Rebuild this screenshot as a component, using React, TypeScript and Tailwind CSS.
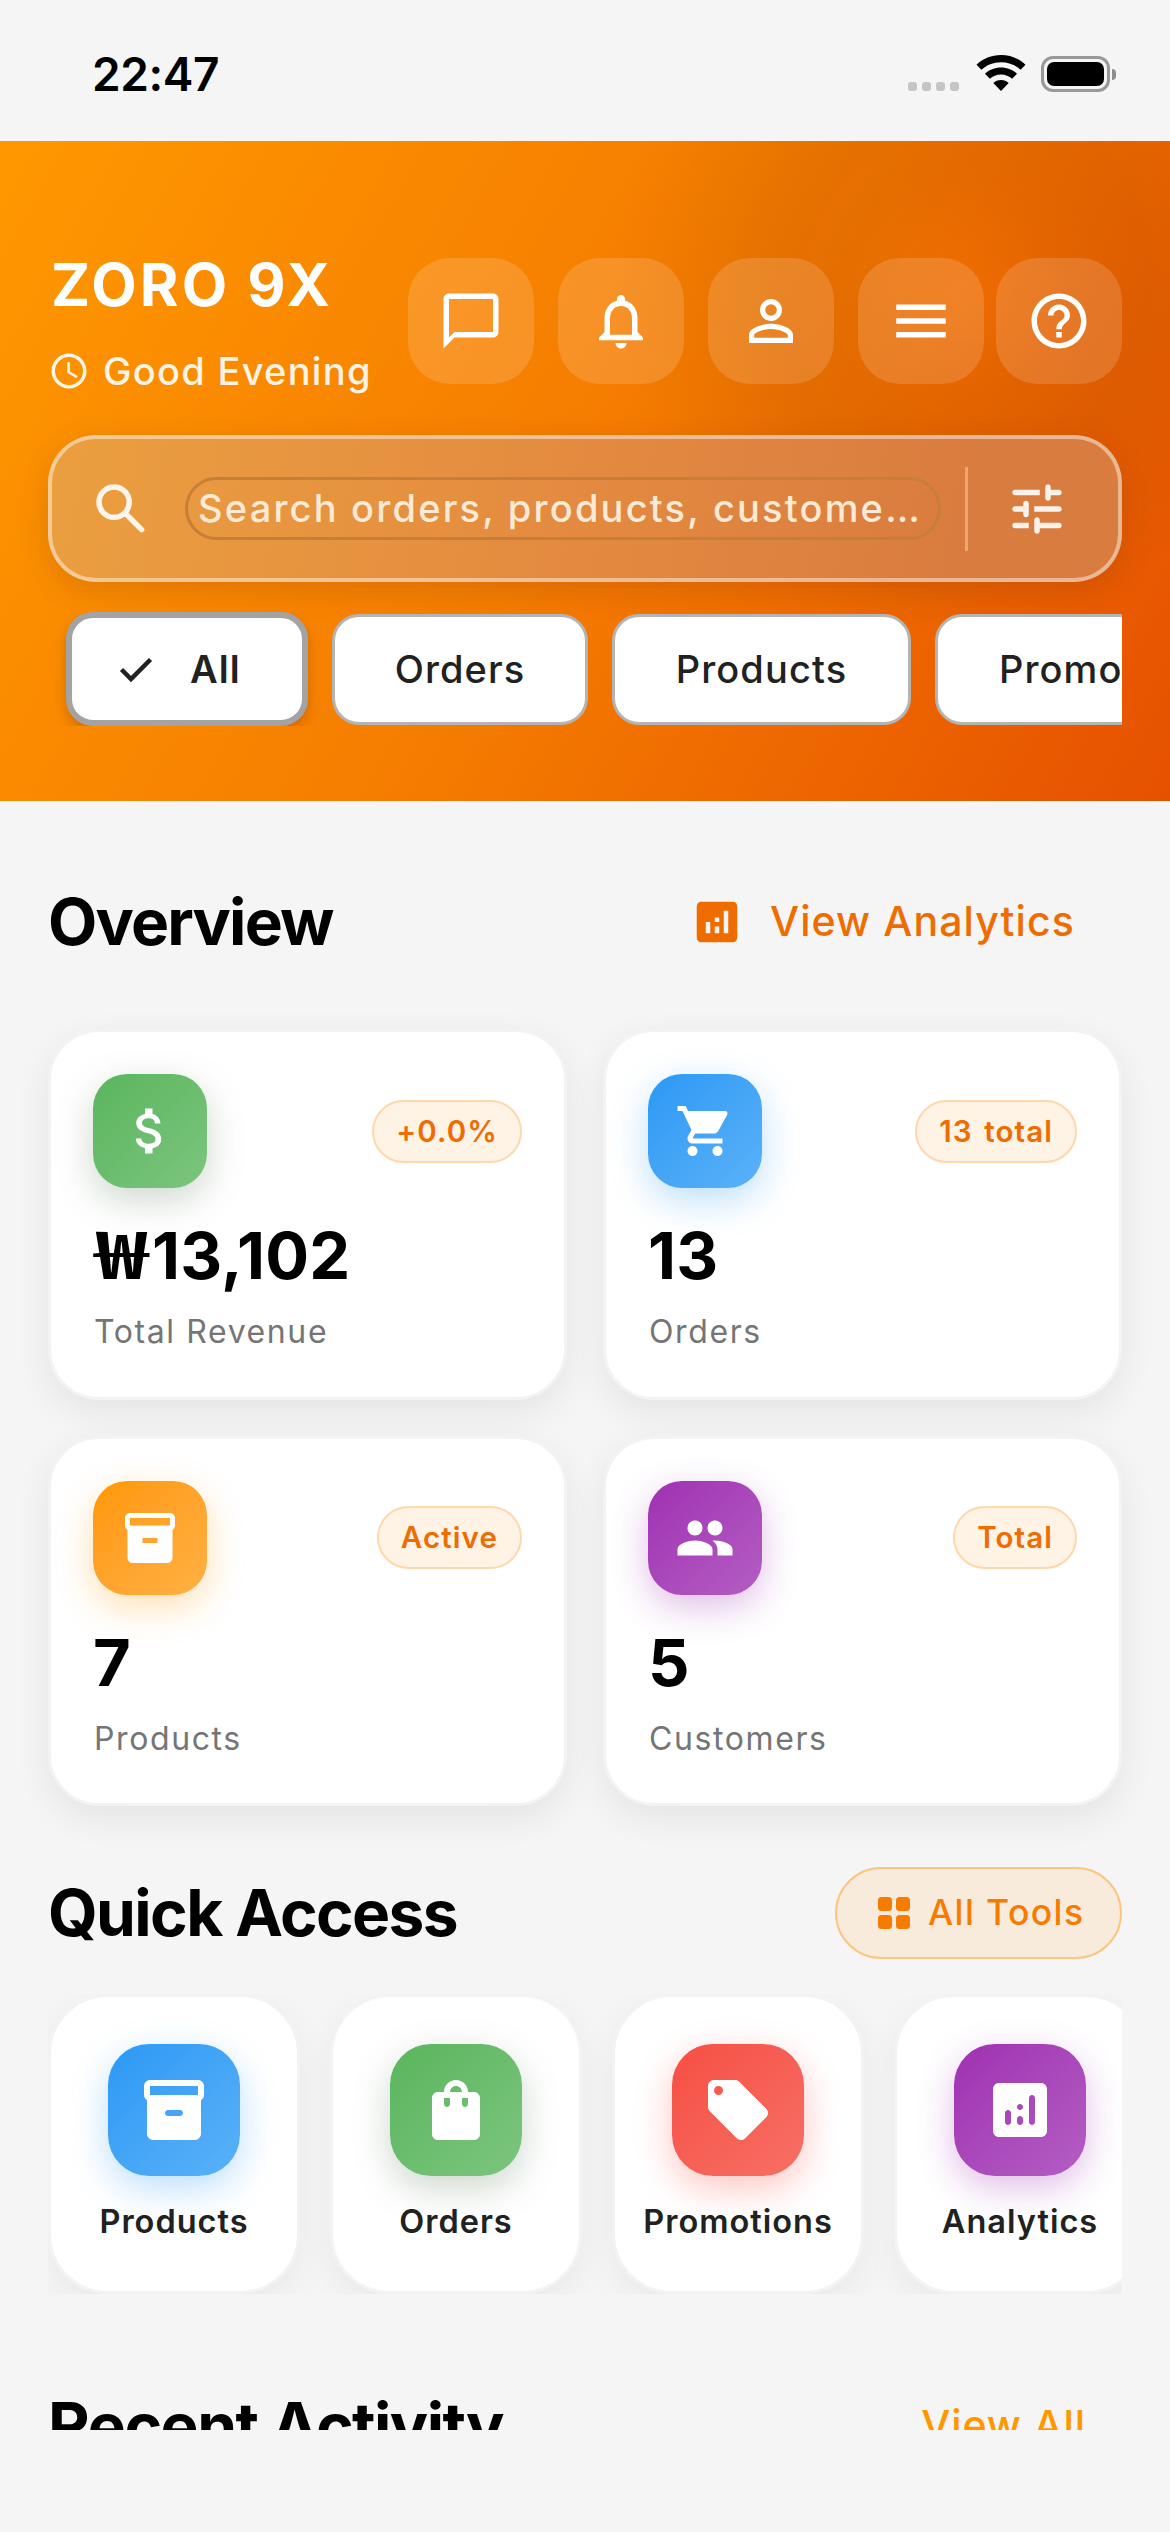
import type { ReactNode } from 'react';
import {
  MdAccessTime,
  MdAnalytics,
  MdAttachMoney,
  MdChatBubbleOutline,
  MdHelpOutline,
  MdInventory2,
  MdLocalOffer,
  MdMenu,
  MdNotificationsNone,
  MdPeople,
  MdPersonOutline,
  MdShoppingCart,
} from 'react-icons/md';

const TuneIcon = () => (
  <svg viewBox="0 0 24 24" className="size-[66px]" fill="currentColor">
    <path d="M3 18c0 .55.45 1 1 1h5v-2H4c-.55 0-1 .45-1 1zM3 6c0 .55.45 1 1 1h9V5H4c-.55 0-1 .45-1 1zm10 14v-1h7c.55 0 1-.45 1-1s-.45-1-1-1h-7v-1c0-.55-.45-1-1-1s-1 .45-1 1v4c0 .55.45 1 1 1s1-.45 1-1zM7 10v1H4c-.55 0-1 .45-1 1s.45 1 1 1h3v1c0 .55.45 1 1 1s1-.45 1-1v-4c0-.55-.45-1-1-1s-1 .45-1 1zm14 2c0-.55-.45-1-1-1h-9v2h9c.55 0 1-.45 1-1zm-5-3c.55 0 1-.45 1-1V7h3c.55 0 1-.45 1-1s-.45-1-1-1h-3V4c0-.55-.45-1-1-1s-1 .45-1 1v4c0 .55.45 1 1 1z" />
  </svg>
);

const SearchIcon = () => (
  <svg viewBox="0 0 24 24" className="size-[66px]" fill="none" stroke="currentColor" strokeWidth="2">
    <circle cx="9.5" cy="9.5" r="5.5" />
    <path d="M14.3 14.3l5.2 5.2" strokeLinecap="round" />
  </svg>
);

const BoxIcon = () => (
  <svg viewBox="0 0 24 24" className="size-[72px]" fill="currentColor">
    <path d="M20 2H4c-1 0-2 .9-2 2v3.01c0 .72.43 1.34 1 1.69V20c0 1.1 1.1 2 2 2h14c.9 0 2-.9 2-2V8.7c.57-.35 1-.97 1-1.69V4c0-1.1-1-2-2-2zm-6 12h-4c-.55 0-1-.45-1-1s.45-1 1-1h4c.55 0 1 .45 1 1s-.45 1-1 1zm6-7H4V4h16v3z" />
  </svg>
);

const BagIcon = () => (
  <svg viewBox="0 0 24 24" className="size-[72px]" fill="currentColor">
    <path d="M18 6h-2c0-2.21-1.79-4-4-4S8 3.79 8 6H6c-1.1 0-2 .9-2 2v12c0 1.1.9 2 2 2h12c1.1 0 2-.9 2-2V8c0-1.1-.9-2-2-2zm-8 4c0 .55-.45 1-1 1s-1-.45-1-1V8h2v2zm2-6c1.1 0 2 .9 2 2h-4c0-1.1.9-2 2-2zm4 6c0 .55-.45 1-1 1s-1-.45-1-1V8h2v2z" />
  </svg>
);

const ChartIcon = () => (
  <svg viewBox="0 0 24 24" className="size-[72px]" fill="currentColor" fillRule="evenodd">
    <path d="M19 3H5c-1.1 0-2 .9-2 2v14c0 1.1.9 2 2 2h14c1.1 0 2-.9 2-2V5c0-1.1-.9-2-2-2zM8 17c-.55 0-1-.45-1-1v-3c0-.55.45-1 1-1s1 .45 1 1v3c0 .55-.45 1-1 1zm4 0c-.55 0-1-.45-1-1v-1c0-.55.45-1 1-1s1 .45 1 1v1c0 .55-.45 1-1 1zm0-5c-.55 0-1-.45-1-1s.45-1 1-1 1 .45 1 1-.45 1-1 1zm4 5c-.55 0-1-.45-1-1V8c0-.55.45-1 1-1s1 .45 1 1v8c0 .55-.45 1-1 1z" />
  </svg>
);

const StatusBar = () => (
  <div className="flex h-[141px] items-start justify-between bg-[#f5f5f5] pl-[92px] pr-[54px] pt-[55px]">
    <span className="text-[46px] font-semibold leading-[38px] tracking-[-0.4px] text-black">22:47</span>
    <div className="flex items-start">
      <div className="mt-[27px] flex gap-[5px]">
        <span className="h-[9px] w-[9px] rounded-[3px] bg-[#c4c5c4]" />
        <span className="h-[9px] w-[9px] rounded-[3px] bg-[#c4c5c4]" />
        <span className="h-[9px] w-[9px] rounded-[3px] bg-[#c4c5c4]" />
        <span className="h-[9px] w-[9px] rounded-[3px] bg-[#c4c5c4]" />
      </div>
      <svg viewBox="0 0 50 36" className="ml-[17px] h-[36px] w-[50px]">
        <path d="M25 0C34.5 0 43 3.6 49.5 9.7L44.6 14.8C39.5 10 32.6 7.2 25 7.2S10.5 10 5.4 14.8L.5 9.7C7 3.6 15.5 0 25 0Z" />
        <path d="M25 12.6C31.2 12.6 36.8 14.9 41 18.7L36.1 23.8C33.2 21.2 29.3 19.6 25 19.6S16.8 21.2 13.9 23.8L9 18.7C13.2 14.9 18.8 12.6 25 12.6Z" />
        <path d="M25 25C28 25 30.7 26.1 32.7 27.9L25 36 17.3 27.9C19.3 26.1 22 25 25 25Z" />
      </svg>
      <div className="ml-[15px] mt-px flex h-[36px] w-[69px] rounded-[12px] border-[3px] border-[#999] p-[3px]">
        <div className="flex-1 rounded-[7px] bg-black" />
      </div>
      <span className="ml-[2px] mt-[14px] h-[11px] w-[4px] rounded-r-full bg-[#8e8e8e]" />
    </div>
  </div>
);

const HeaderButton = ({ children }: { children: ReactNode }) => (
  <button className="flex size-[126px] items-center justify-center rounded-[42px] bg-white/15 text-[66px] text-white">
    {children}
  </button>
);

const Header = () => (
  <header className="h-[660px] bg-[linear-gradient(119.4deg,#ff9800_0%,#f57c00_50%,#e65100_100%)]">
    <div className="h-full bg-[radial-gradient(circle_at_960px_150px,transparent_0,rgba(0,0,0,0.05)_110px,rgba(0,0,0,0.06)_190px,transparent_350px)] px-12 pt-[109px]">
      <div className="flex h-[142px] items-center justify-between">
        <div className="pl-[3px]">
          <h1 className="whitespace-nowrap text-[59px] font-bold leading-[69px] tracking-[3.1px] text-white">ZORO 9X</h1>
          <div className="-ml-[3px] mt-[31px] flex h-[42px] items-center text-white/90">
            <MdAccessTime className="text-[42px]" />
            <span className="ml-[13px] whitespace-nowrap text-[38px] font-medium tracking-[1.3px]">Good Evening</span>
          </div>
        </div>
        <div className="flex gap-6">
          <HeaderButton><MdChatBubbleOutline /></HeaderButton>
          <HeaderButton><MdNotificationsNone /></HeaderButton>
          <HeaderButton><MdPersonOutline /></HeaderButton>
          <div className="flex gap-3">
            <HeaderButton><MdMenu /></HeaderButton>
            <HeaderButton><MdHelpOutline /></HeaderButton>
          </div>
        </div>
      </div>

      <div className="mt-[43px] flex h-[147px] items-center rounded-[48px] border-[4.5px] border-white/45 bg-[linear-gradient(100deg,#eb9f3f,#e38a40_50%,#d97c3f_85%)] bg-origin-border pl-9 pr-12 text-white/90 shadow-[0_9px_30px_rgba(120,50,0,0.2)]">
        <SearchIcon />
        <div className="ml-[31px] flex h-[63px] w-[756px] items-center rounded-full border-[3px] border-[#c77f38] pl-[10px]">
          <span className="whitespace-nowrap text-[38px] font-medium tracking-[2.2px] text-[#fcead6]">Search orders, products, custome…</span>
        </div>
        <div className="ml-6 h-[84px] w-[3px] bg-[#eda571]" />
        <div className="ml-9"><TuneIcon /></div>
      </div>

      <div className="mt-[30px] flex h-[114px] items-center gap-6 overflow-hidden pl-[18px] text-[38px] font-medium tracking-[1.1px] text-[#212121]">
        <div className="flex h-[114px] w-[242px] shrink-0 items-center rounded-[27px] border-[6px] border-[#a3a3a3] bg-white pl-[46px] shadow-[0_6px_12px_rgba(120,50,0,0.3)]">
          <svg viewBox="0 0 36 28" className="h-[28px] w-[36px]" fill="none" stroke="#212121" strokeWidth="4.5">
            <path d="M3.5 14.5l9.5 9.5L32.5 4.5" />
          </svg>
          <span className="ml-[36px] font-semibold">All</span>
        </div>
        <div className="flex h-[111px] w-[256px] shrink-0 items-center justify-center rounded-[27px] border-[3px] border-[#b4b4b4] bg-white">Orders</div>
        <div className="flex h-[111px] w-[299px] shrink-0 items-center justify-center rounded-[27px] border-[3px] border-[#b4b4b4] bg-white">Products</div>
        <div className="flex h-[111px] w-[340px] shrink-0 items-center rounded-[27px] border-[3px] border-[#b4b4b4] bg-white pl-[61px]">Promotions</div>
      </div>
    </div>
  </header>
);

const stats = [
  {
    label: 'Total Revenue',
    value: (
      <>
        {/* the won glyph is narrow in this font, so it is stretched to the width of the digits */}
        <span className="ml-[2px] inline-block w-[57px] origin-left scale-x-[1.38] font-['Noto_Sans_CJK_KR'] leading-none">₩</span>
        13,102
      </>
    ),
    badge: '+0.0%',
    icon: <MdAttachMoney />,
    tile: 'from-[#5ab55d] to-[#7cc57f] shadow-[0_12px_36px_rgba(60,100,60,0.25)]',
  },
  { label: 'Orders', value: '13', badge: '13 total', icon: <MdShoppingCart />, tile: 'from-[#2a99f4] to-[#5ab1f8] shadow-[0_12px_36px_rgba(33,150,243,0.3)]' },
  { label: 'Products', value: '7', badge: 'Active', icon: <MdInventory2 />, tile: 'from-[#ff9800] to-[#ffb042] shadow-[0_12px_36px_rgba(255,152,0,0.3)]' },
  { label: 'Customers', value: '5', badge: 'Total', icon: <MdPeople />, tile: 'from-[#9f30b2] to-[#b45dc3] shadow-[0_12px_36px_rgba(156,39,176,0.3)]' },
];

const tools = [
  { label: 'Products', icon: <BoxIcon />, tile: 'from-[#2a99f4] to-[#5ab1f8] shadow-[0_12px_36px_rgba(33,150,243,0.3)]' },
  { label: 'Orders', icon: <BagIcon />, tile: 'from-[#5ab55d] to-[#7cc57f] shadow-[0_12px_36px_rgba(60,100,60,0.25)]' },
  { label: 'Promotions', icon: <MdLocalOffer />, tile: 'from-[#f64e43] to-[#f76f65] shadow-[0_12px_36px_rgba(244,67,54,0.3)]' },
  { label: 'Analytics', icon: <ChartIcon />, tile: 'from-[#9f30b2] to-[#b45dc3] shadow-[0_12px_36px_rgba(156,39,176,0.3)]' },
];

export default function App() {
  return (
    <main className="h-[2532px] w-[1170px] overflow-hidden bg-[#f5f5f5] font-['Inter','Noto_Sans_CJK_KR',sans-serif]">
      <StatusBar />
      <Header />

      <div className="px-12">
        <div className="flex h-[228px] items-center justify-between pr-[47px] pt-[14px]">
          <h2 className="text-[64px] font-bold tracking-[-1.8px] text-black">Overview</h2>
          <div className="flex items-center text-[#ef6c00]">
            <MdAnalytics className="text-[54px]" />
            <span className="ml-[26px] text-[41px] font-medium tracking-[1.1px]">View Analytics</span>
          </div>
        </div>

        <div className="grid grid-cols-2 gap-9">
          {stats.map((stat) => (
            <div key={stat.label} className="h-[370.5px] rounded-[51px] border-[3px] border-[#f3f3f3] bg-white p-[42px] shadow-[0_12px_36px_rgba(0,0,0,0.07)]">
              <div className="flex items-center justify-between">
                <div className={`flex size-[114px] items-center justify-center rounded-[34px] bg-linear-to-br text-[60px] text-white ${stat.tile}`}>
                  {stat.icon}
                </div>
                <span className="flex h-[63px] items-center rounded-full border-2 border-[#fdd8ac] bg-[#fff3e6] px-[22px] text-[29.5px] font-semibold tracking-[1.1px] text-[#ef6c00] [word-spacing:3px]">
                  {stat.badge}
                </span>
              </div>
              <p className="mt-[29px] h-[78px] whitespace-nowrap text-[65px] font-bold leading-[78px] tracking-[0.2px] text-black">{stat.value}</p>
              <p className="mt-[13px] pl-px text-[32px] leading-[48px] tracking-[1.6px] text-[#757575]">{stat.label}</p>
            </div>
          ))}
        </div>

        <div className="flex h-[188px] items-center justify-between pt-[25px]">
          <h2 className="text-[64px] font-bold tracking-[-1.6px] text-black">Quick Access</h2>
          <div className="flex h-[92px] w-[287px] items-center rounded-full border-[2.5px] border-[#fbc680] bg-[#f8ebdc] pl-[41px] text-[#f57c00]">
            <svg viewBox="0 0 32 32" className="size-[32px]" fill="currentColor">
              <rect width="14" height="14" rx="3.5" />
              <rect x="18" width="14" height="14" rx="3.5" />
              <rect y="18" width="14" height="14" rx="3.5" />
              <rect x="18" y="18" width="14" height="14" rx="3.5" />
            </svg>
            <span className="ml-[18px] whitespace-nowrap text-[35.5px] font-medium tracking-[1.4px]">All Tools</span>
          </div>
        </div>

        <div className="flex h-[300px] gap-[30px] overflow-hidden">
          {tools.map((tool) => (
            <div key={tool.label} className="flex h-[300px] w-[252px] shrink-0 flex-col items-center rounded-[60px] border-[3px] border-[#f3f3f3] bg-white pt-[47px] shadow-[0_12px_36px_rgba(0,0,0,0.05)]">
              <div className={`flex size-[132px] shrink-0 items-center justify-center rounded-[41px] bg-linear-to-br text-[72px] text-white ${tool.tile}`}>
                {tool.icon}
              </div>
              <p className="mt-[22px] text-[32.5px] font-semibold leading-[48px] tracking-[1px] text-[#212121]">{tool.label}</p>
            </div>
          ))}
        </div>

        <div className="h-[136px] overflow-hidden">
          <div className="flex h-[264px] items-center justify-between pr-[36px]">
            <h2 className="text-[64px] font-bold tracking-[-1.5px] text-black">Recent Activity</h2>
            <span className="text-[41px] font-medium tracking-[0.9px] text-[#ff9800]">View All</span>
          </div>
        </div>
      </div>
    </main>
  );
}
